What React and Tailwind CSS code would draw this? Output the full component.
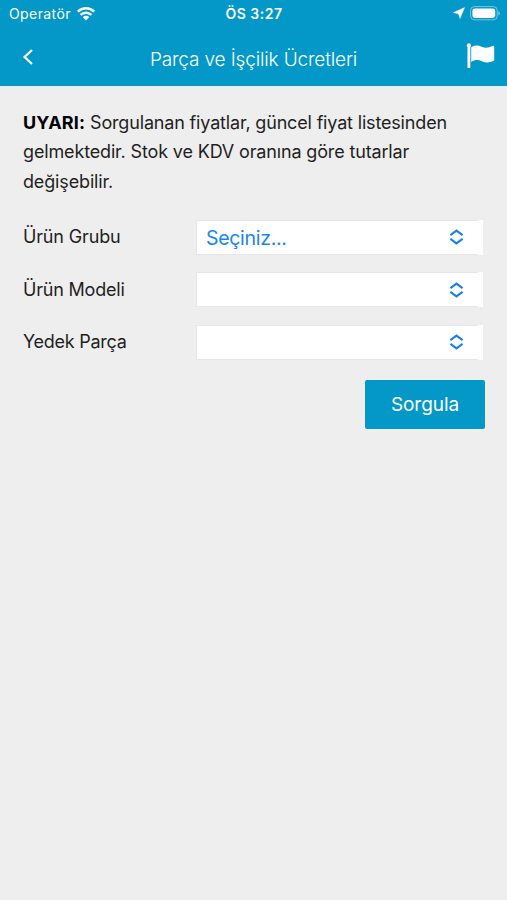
const fields = [
  { label: 'Ürün Grubu', value: 'Seçiniz...', tracking: 'tracking-[-0.15px]' },
  { label: 'Ürün Modeli', value: '', tracking: 'tracking-[-0.2px]' },
  { label: 'Yedek Parça', value: '', tracking: 'tracking-[-0.27px]' },
];

function StatusBar() {
  return (
    <div className="grid h-[28px] grid-cols-3 items-center px-[9px]">
      <div className="flex items-center gap-[6px]">
        <span className="text-[14px] leading-none tracking-[0.4px]">Operatör</span>
        <svg width="18" height="14" viewBox="0 0 18 14" fill="none" stroke="white" strokeWidth="2.5">
          <path d="M0.8 4.6C5.4 0.2 12.6 0.2 17.2 4.6" />
          <path d="M3.6 7.9C6.7 4.9 11.3 4.9 14.4 7.9" />
          <path d="M5.8 10.1C7.6 8.4 10.4 8.4 12.2 10.1L9 13.4Z" fill="white" stroke="none" />
        </svg>
      </div>
      <span className="pl-[1px] text-center text-[14px] font-semibold leading-none tracking-[0.5px]">ÖS 3:27</span>
      <div className="-mr-[3px] -mt-[2px] flex items-center justify-end gap-[5px]">
        <svg width="12" height="12" viewBox="0 0 12 12" fill="white">
          <path d="M11.6 0.6L7 11.6L5.6 7L0.4 5.6Z" stroke="white" strokeWidth="0.4" />
        </svg>
        <svg width="31" height="15" viewBox="0 0 31 15" fill="none">
          <rect x="0.6" y="0.6" width="26.6" height="13.2" rx="3.8" stroke="white" strokeOpacity="0.45" />
          <rect x="2.4" y="2.4" width="22.8" height="9.6" rx="2.4" fill="white" />
          <path d="M28.4 5C30.4 5.8 30.4 8.6 28.4 9.4Z" fill="white" fillOpacity="0.5" />
        </svg>
      </div>
    </div>
  );
}

function NavBar() {
  return (
    <div className="grid h-[58px] grid-cols-[60px_1fr_60px] items-center">
      <svg className="ml-[22px] -mt-[1px]" width="12" height="18" viewBox="0 0 12 18" fill="none" stroke="white" strokeWidth="2.3">
        <path d="M10 2L2.6 9L10 16" />
      </svg>
      <h1 className="mt-[4px] whitespace-nowrap text-center text-[19px] font-light leading-none tracking-[-0.14px]">Parça ve İşçilik Ücretleri</h1>
      <svg className="ml-[19px] -mt-[3px]" width="30" height="26" viewBox="0 0 30 26" fill="white">
        <circle cx="2.9" cy="2.4" r="2.1" />
        <rect x="1.5" y="2.4" width="2.8" height="22.6" rx="0.6" />
        <path d="M5.2 4.2C8.6 1.8 12.2 2 15.6 3.7C19.4 5.5 23 4.9 27 2.8C27.6 2.5 28.2 2.8 28.2 3.5V16.6C28.2 17.1 28 17.4 27.5 17.7C23.6 19.8 19.8 20 16 18.2C12.4 16.5 9 16.7 5.2 18.9Z" />
      </svg>
    </div>
  );
}

function Select({ value }) {
  return (
    <button className="relative flex h-[35px] w-[287px] items-center justify-between border border-r-0 border-[#e6e6e6] bg-white pl-[9px] pr-[19px] text-[#1a84f5]">
      <span className="mt-[2px] text-[19.5px] leading-none tracking-[-0.3px]">{value}</span>
      <svg width="15" height="16" viewBox="0 0 15 16" fill="none" stroke="#1a80f0" strokeWidth="2.1">
        <path d="M1.4 6.2L7.5 1.6L13.6 6.2" />
        <path d="M1.4 9.8L7.5 14.4L13.6 9.8" />
      </svg>
      <span className="absolute -top-px -bottom-px right-0 w-[5px] bg-white" />
    </button>
  );
}

export default function App() {
  return (
    <div className="h-[900px] w-[507px] overflow-hidden bg-[#eeeeee] font-['Inter','Liberation_Sans',sans-serif] text-[#1f1f1f]">
      <header className="h-[86px] bg-[#0398c8] text-white">
        <StatusBar />
        <NavBar />
      </header>
      <main className="px-[23px] pt-[22px]">
        <p className="whitespace-nowrap text-[18px] leading-[29.3px]">
          <span className="block tracking-[-0.17px]"><b className="font-bold tracking-[0.15px] text-black">UYARI:</b> Sorgulanan fiyatlar, güncel fiyat listesinden</span>
          <span className="block tracking-[-0.15px]">gelmektedir. Stok ve KDV oranına göre tutarlar</span>
          <span className="block tracking-[-0.15px]">değişebilir.</span>
        </p>
        <div className="mt-[24px] flex flex-col gap-[17.5px]">
          {fields.map((f) => (
            <div key={f.label} className="flex h-[35px] items-center">
              <label className={`w-[173px] text-[18px] leading-none ${f.tracking}`}>{f.label}</label>
              <Select value={f.value} />
            </div>
          ))}
        </div>
        <div className="-mr-[1px] mt-[20px] flex justify-end">
          <button className="h-[49px] w-[120px] rounded-[2px] bg-[#0398c8] pt-[2px] text-[19px] tracking-[-0.05px] text-white">Sorgula</button>
        </div>
      </main>
    </div>
  );
}
